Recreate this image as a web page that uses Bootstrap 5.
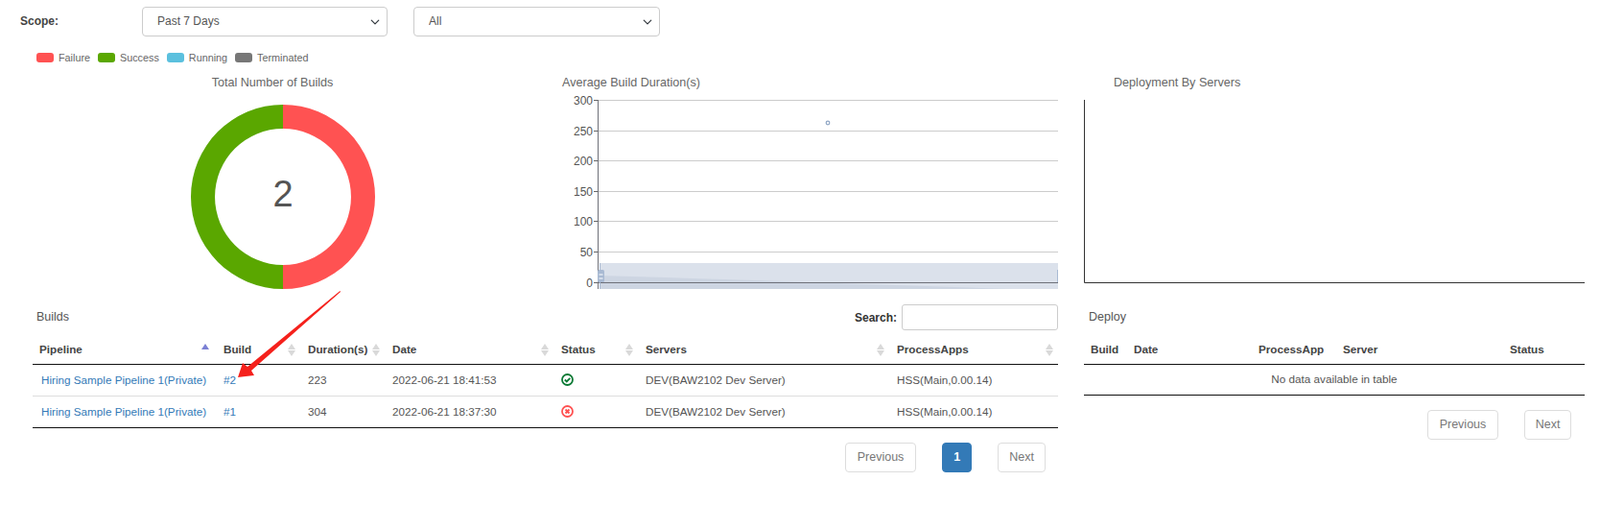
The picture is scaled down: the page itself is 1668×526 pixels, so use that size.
<!DOCTYPE html>
<html lang="en">
<head>
<meta charset="utf-8">
<title>Builds</title>
<link href="https://cdn.jsdelivr.net/npm/bootstrap@5.3.0/dist/css/bootstrap.min.css" rel="stylesheet">
<style>
html,body{height:526px;overflow:hidden}
body{font-family:"Liberation Sans",Arial,sans-serif;font-size:12px;color:#555;background:#fff;position:relative}
.filter-bar{height:45px;padding-left:21px;align-items:center}
.filter-bar .scope-label{width:127px;font-weight:700;color:#444;margin-top:-2px}
.filter-bar .form-select{width:256px;height:31px;font-size:12px;color:#555;padding:0 24px 2px 15px;border-color:#ccc;border-radius:4px;background-position:right 5px center;background-size:14px 10px}
.filter-bar .second{margin-left:27px;width:257px}
.legend-row{height:30px;padding-left:38px;gap:8px;font-size:10.8px;color:#666;align-items:center}
.legend-item{display:flex;align-items:center;gap:5px}
.swatch{width:18px;height:10px;border-radius:3px;display:block}
.sw-fail{background:#ff5252}.sw-ok{background:#5aa700}.sw-run{background:#5bc0de}.sw-term{background:#777}
.charts-row{height:234px;padding-top:2px;padding-left:34px}
.chart-title{height:18px;line-height:18px;color:#666;font-size:12.6px}
.donut-col{width:552px}
.donut-col .chart-title{width:500px;text-align:center}
.donut-col svg{margin-left:165px;display:block}
.line-col{width:517px}
.deploy-col{width:522px;margin-left:27px}
.deploy-col .chart-title{padding-left:31px}
.charts-row svg{display:block}
.tables-row{padding-left:34px;gap:27px}
.builds-pane{width:1069px}
.deploy-pane{width:522px}
.pane-head{height:43px;align-items:center;padding-left:4px;font-size:12.5px}
.deploy-pane .pane-head{padding-left:5px}
.search-box{display:flex;align-items:center;gap:5px;font-weight:700;color:#333;font-size:12px}
.search-box .form-control{width:163px;height:27px;padding:0 6px;border-color:#ccc;border-radius:3px;font-size:12px}
table.data-grid{table-layout:fixed;width:100%;margin:0;font-size:11.7px;--bs-table-color:#555;--bs-table-bg:transparent;color:#555}
.data-grid th{height:27px;padding:0 8px 2px;font-weight:700;border-bottom:1.5px solid #111;color:#444;vertical-align:middle;white-space:nowrap}
.data-grid td{height:33px;padding:0 8px;border-bottom:1.5px solid #ddd;vertical-align:middle;white-space:nowrap}
.data-grid tbody tr:last-child td{border-bottom:1.5px solid #111}
.data-grid a{color:#337ab7;text-decoration:none}
.data-grid th:first-child{padding-left:7px}
.data-grid td.pipe{padding-left:9px}
.th-inner{display:flex;justify-content:space-between;align-items:center}
.th-inner svg{flex:none;margin-right:-3px}
.data-grid th:first-child .th-inner svg{margin-right:-1px}
.c1{width:191px}.c2{width:88px}.c3{width:88px}.c4{width:176px}.c5{width:88px}.c6{width:262px}.c7{width:176px}
.d1{width:44px}.d2{width:130px}.d3{width:88px}.d4{width:174px}.d5{width:86px}
.status-ico{display:block}
.data-grid td.empty-note{text-align:center;height:32px}
.pager{gap:28px;margin:15px 0 0;justify-content:flex-end;padding-right:13px;--bs-pagination-font-size:12.5px}
.pager .page-link{height:31px;line-height:29px;padding:0 12px;color:#777;border:1px solid #ddd;border-radius:4px!important;margin:0;background:#fff}
.pager .active .page-link{background:#337ab7;border-color:#337ab7;color:#fff;font-weight:700}
.pager .one .page-link{padding:0 11px}
.pager .nxt .page-link{padding:0 11px}
.deploy-pane .pager{padding-right:14px}
.deploy-pane .pager .nxt .page-link{padding:0 10.5px}
.red-arrow{position:absolute;left:0;top:0;pointer-events:none}
</style>
</head>
<body>
<div class="d-flex filter-bar">
  <label class="scope-label" for="scopeA">Scope:</label>
  <select class="form-select" id="scopeA"><option>Past 7 Days</option></select>
  <select class="form-select second" aria-label="Filter"><option>All</option></select>
</div>
<div class="d-flex legend-row">
  <span class="legend-item"><i class="swatch sw-fail"></i>Failure</span>
  <span class="legend-item"><i class="swatch sw-ok"></i>Success</span>
  <span class="legend-item"><i class="swatch sw-run"></i>Running</span>
  <span class="legend-item"><i class="swatch sw-term"></i>Terminated</span>
</div>
<div class="d-flex charts-row">
  <div class="donut-col">
    <div class="chart-title">Total Number of Builds</div>
    <svg width="192" height="206" viewBox="0 0 192 206">
      <path d="M96 14a96 96 0 0 1 0 192v-25a71 71 0 0 0 0-142z" fill="#ff5252"/>
      <path d="M96 14a96 96 0 0 0 0 192v-25a71 71 0 0 1 0-142z" fill="#5aa700"/>
      <text x="96" y="120" text-anchor="middle" font-size="38" fill="#555" font-family="Liberation Sans">2</text>
    </svg>
  </div>
  <div class="line-col">
    <div class="chart-title">Average Build Duration(s)</div>
    <svg width="517" height="210" viewBox="0 0 517 210" font-family="Liberation Sans" font-size="12" fill="#555">
      <g stroke="#ccc" stroke-width="1">
        <path d="M37.500 9.500H517M37.500 41.500H517M37.500 72.500H517M37.500 104.500H517M37.500 135.500H517M37.500 167.500H517"/>
      </g>
      <path d="M39 179H517V206H39z" fill="#dbe1eb"/>
      <path d="M39 192C180 196 340 202 470 206H39z" fill="#cdd5e2"/>
      <path d="M33 9.500H37.500M33 41.500H37.500M33 72.500H37.500M33 104.500H37.500M33 135.500H37.500M33 167.500H37.500M33 199.500H37.500" stroke="#666"/>
      <path d="M37.500 9V206M37.500 199.500H517" stroke="#6e7079" fill="none"/>
      <path d="M39.500 179V206" stroke="#a9bad3"/>
      <rect x="37" y="186" width="7" height="13" rx="1.500" fill="#a9bad3"/>
      <path d="M38.500 191H42.500M38.500 195H42.500" stroke="#fff"/>
      <rect x="516" y="186" width="1" height="13" fill="#a9bad3"/>
      <circle cx="277" cy="33" r="1.800" fill="#fff" stroke="#8fa6c4" stroke-width="1.200"/>
      <g text-anchor="end">
        <text x="32" y="14">300</text><text x="32" y="46">250</text><text x="32" y="77">200</text><text x="32" y="109">150</text><text x="32" y="140">100</text><text x="32" y="172">50</text><text x="32" y="204">0</text>
      </g>
    </svg>
  </div>
  <div class="deploy-col">
    <div class="chart-title">Deployment By Servers</div>
    <svg width="522" height="210" viewBox="0 0 522 210">
      <path d="M.500 9V199.500H522" fill="none" stroke="#333"/>
    </svg>
  </div>
</div>
<div class="d-flex tables-row">
  <div class="builds-pane">
    <div class="d-flex justify-content-between pane-head">
      <span>Builds</span>
      <label class="search-box">Search: <input class="form-control" type="search"></label>
    </div>
    <table class="table data-grid">
      <colgroup><col class="c1"><col class="c2"><col class="c3"><col class="c4"><col class="c5"><col class="c6"><col class="c7"></colgroup>
      <thead><tr>
        <th><div class="th-inner">Pipeline<svg width="8" height="13" viewBox="0 0 8 13"><path d="M4 0l4 6H0z" fill="#7b80d4"/></svg></div></th>
        <th><div class="th-inner">Build<svg width="8" height="13" viewBox="0 0 8 13"><path d="M4 0l4 6H0zM4 13l4-6H0z" fill="#d9d9d9"/></svg></div></th>
        <th><div class="th-inner">Duration(s)<svg width="8" height="13" viewBox="0 0 8 13"><path d="M4 0l4 6H0zM4 13l4-6H0z" fill="#d9d9d9"/></svg></div></th>
        <th><div class="th-inner">Date<svg width="8" height="13" viewBox="0 0 8 13"><path d="M4 0l4 6H0zM4 13l4-6H0z" fill="#d9d9d9"/></svg></div></th>
        <th><div class="th-inner">Status<svg width="8" height="13" viewBox="0 0 8 13"><path d="M4 0l4 6H0zM4 13l4-6H0z" fill="#d9d9d9"/></svg></div></th>
        <th><div class="th-inner">Servers<svg width="8" height="13" viewBox="0 0 8 13"><path d="M4 0l4 6H0zM4 13l4-6H0z" fill="#d9d9d9"/></svg></div></th>
        <th><div class="th-inner">ProcessApps<svg width="8" height="13" viewBox="0 0 8 13"><path d="M4 0l4 6H0zM4 13l4-6H0z" fill="#d9d9d9"/></svg></div></th>
      </tr></thead>
      <tbody>
        <tr>
          <td class="pipe"><a href="#">Hiring Sample Pipeline 1(Private)</a></td><td><a href="#">#2</a></td><td>223</td><td>2022-06-21 18:41:53</td>
          <td><svg class="status-ico" width="13" height="13" viewBox="0 0 13 13"><circle cx="6.500" cy="6.500" r="5.500" fill="none" stroke="#0a7a35" stroke-width="1.800"/><path d="M3.800 6.500l2 2 3.500-3.600" fill="none" stroke="#0a7a35" stroke-width="1.800"/></svg></td>
          <td>DEV(BAW2102 Dev Server)</td><td>HSS(Main,0.00.14)</td>
        </tr>
        <tr>
          <td class="pipe"><a href="#">Hiring Sample Pipeline 1(Private)</a></td><td><a href="#">#1</a></td><td>304</td><td>2022-06-21 18:37:30</td>
          <td><svg class="status-ico" width="13" height="13" viewBox="0 0 13 13"><circle cx="6.500" cy="6.500" r="5.500" fill="none" stroke="#ff5252" stroke-width="1.800"/><path d="M4.500 4.500l4 4M8.500 4.500l-4 4" fill="none" stroke="#ff5252" stroke-width="2"/></svg></td>
          <td>DEV(BAW2102 Dev Server)</td><td>HSS(Main,0.00.14)</td>
        </tr>
      </tbody>
    </table>
    <ul class="pagination pager">
      <li class="page-item"><a class="page-link" href="#">Previous</a></li>
      <li class="page-item active one"><a class="page-link" href="#">1</a></li>
      <li class="page-item nxt"><a class="page-link" href="#">Next</a></li>
    </ul>
  </div>
  <div class="deploy-pane">
    <div class="d-flex pane-head"><span>Deploy</span></div>
    <table class="table data-grid">
      <colgroup><col class="d1"><col class="d2"><col class="d3"><col class="d4"><col class="d5"></colgroup>
      <thead><tr><th>Build</th><th>Date</th><th>ProcessApp</th><th>Server</th><th>Status</th></tr></thead>
      <tbody><tr><td class="empty-note" colspan="5">No data available in table</td></tr></tbody>
    </table>
    <ul class="pagination pager">
      <li class="page-item"><a class="page-link" href="#">Previous</a></li>
      <li class="page-item nxt"><a class="page-link" href="#">Next</a></li>
    </ul>
  </div>
</div>
<svg class="red-arrow" width="400" height="420" viewBox="0 0 400 420"><path d="M354.500 303L258 382 253 378 248 393 265 391 262 386 355 304z" fill="#f5211c"/></svg>
</body>
</html>
